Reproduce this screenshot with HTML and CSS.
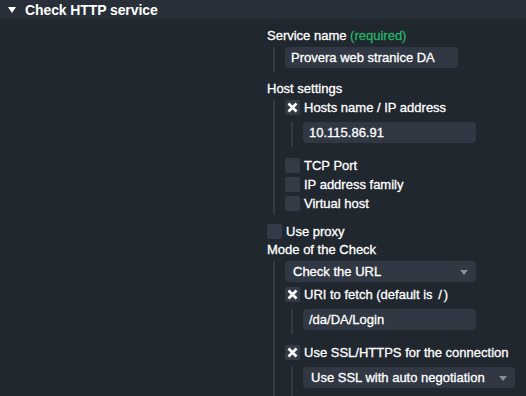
FILE: index.html
```html
<!DOCTYPE html>
<html lang="en">

<head>
    <meta charset="UTF-8">
    <title>Check HTTP service</title>
    <link rel="stylesheet" href="styles.css">
</head>

<body>

    <!-- Rule header -->
    <div class="header">
        <svg class="toggle" width="8" height="7" viewBox="0 0 8 7"><polygon points="0,0 8,0 4,6" fill="#ffffff"/></svg>
        <span>Check HTTP service</span>
    </div>

    <div class="form">
        <div class="legend"></div>
        <div class="fields">
            <div class="title">Service name <span class="required">(required)</span></div>
            <div class="nest">
                <div class="input">Provera web stranice DA</div>
            </div>

            <div class="title gap-title">Host settings</div>
            <div class="nest">
                <div class="check-row">
                    <span class="checkbox checked"><svg width="15" height="15" viewBox="0 0 15 15"><path d="M3.5 3.5 L11.5 11.5 M11.5 3.5 L3.5 11.5" stroke="#ffffff" stroke-width="2.6"/></svg></span>
                    <span>Hosts name / IP address</span>
                </div>
                <div class="nest sub">
                    <div class="input">10.115.86.91</div>
                </div>
                <div class="check-row after-nest">
                    <span class="checkbox"></span>
                    <span>TCP Port</span>
                </div>
                <div class="check-row next">
                    <span class="checkbox"></span>
                    <span>IP address family</span>
                </div>
                <div class="check-row next">
                    <span class="checkbox"></span>
                    <span>Virtual host</span>
                </div>
            </div>

            <div class="check-row proxy">
                <span class="checkbox"></span>
                <span>Use proxy</span>
            </div>

            <div class="title mode-title">Mode of the Check</div>
            <div class="nest open">
                <div class="select">Check the URL<span class="arrow"></span></div>
                <div class="check-row next-select">
                    <span class="checkbox checked"><svg width="15" height="15" viewBox="0 0 15 15"><path d="M3.5 3.5 L11.5 11.5 M11.5 3.5 L3.5 11.5" stroke="#ffffff" stroke-width="2.6"/></svg></span>
                    <span>URI to fetch (default is <span class="tt">/</span>)</span>
                </div>
                <div class="nest sub">
                    <div class="input">/da/DA/Login</div>
                </div>
                <div class="check-row after-nest">
                    <span class="checkbox checked"><svg width="15" height="15" viewBox="0 0 15 15"><path d="M3.5 3.5 L11.5 11.5 M11.5 3.5 L3.5 11.5" stroke="#ffffff" stroke-width="2.6"/></svg></span>
                    <span>Use SSL/HTTPS for the connection</span>
                </div>
                <div class="nest sub open">
                    <div class="select wide">Use SSL with auto negotiation<span class="arrow"></span></div>
                </div>
            </div>
        </div>
    </div>

</body>

</html>
```

FILE: styles.css
```css
/* Global Styles */
body {
    font-family: "Liberation Sans", Arial, sans-serif;
    font-size: 13px;
    color: #ffffff;
    background-color: #21272f;
    margin: 0;
    padding: 0;
    height: 396px;
    overflow: hidden;
    -webkit-text-stroke: 0.3px #ffffff;
}

.header {
    height: 19px;
    background-color: #292f38;
    display: flex;
    align-items: center;
    font-size: 14px;
    font-weight: bold;
    letter-spacing: -0.1px;
    -webkit-text-stroke: 0;
}

.header .toggle {
    margin: 1px 9px 0 8px;
}

.form {
    display: grid;
    grid-template-columns: 267px 1fr;
    padding-top: 10px;
}

.title {
    height: 14px;
    line-height: 14px;
}

.required {
    color: #25b366;
    -webkit-text-stroke: 0.3px #25b366;
}

.tt {
    padding: 0 2px;
}

.gap-title {
    margin-top: 10px;
}

.mode-title {
    margin-top: 4px;
}

/* nested guide lines */
.nest {
    margin-left: 6px;
    border-left: 2px solid #343b45;
    padding-left: 10px;
    padding-bottom: 4px;
    margin-top: 4px;
}

.nest.sub {
    margin-top: 7px;
}

.nest.open {
    padding-bottom: 12px;
}

.input,
.select {
    width: 167px;
    height: 21px;
    line-height: 21px;
    padding-left: 6px;
    background-color: #313843;
    border-radius: 4px;
}

.select {
    position: relative;
    width: 183px;
    padding-left: 8px;
}

.select.wide {
    width: 204px;
}

.select .arrow {
    position: absolute;
    right: 8px;
    top: 9px;
    border-left: 4px solid transparent;
    border-right: 4px solid transparent;
    border-top: 5px solid #8a8f98;
}

.check-row {
    display: flex;
    align-items: center;
    height: 15px;
    line-height: 15px;
    gap: 4px;
}

.check-row.after-nest {
    margin-top: 11px;
}

.check-row.next {
    margin-top: 4px;
}

.check-row.next-select {
    margin-top: 5px;
}

.check-row.proxy {
    margin-top: 9px;
}

.checkbox {
    width: 15px;
    height: 15px;
    background-color: #343b46;
    border-radius: 2px;
    flex-shrink: 0;
}

.checkbox svg {
    display: block;
}
```
